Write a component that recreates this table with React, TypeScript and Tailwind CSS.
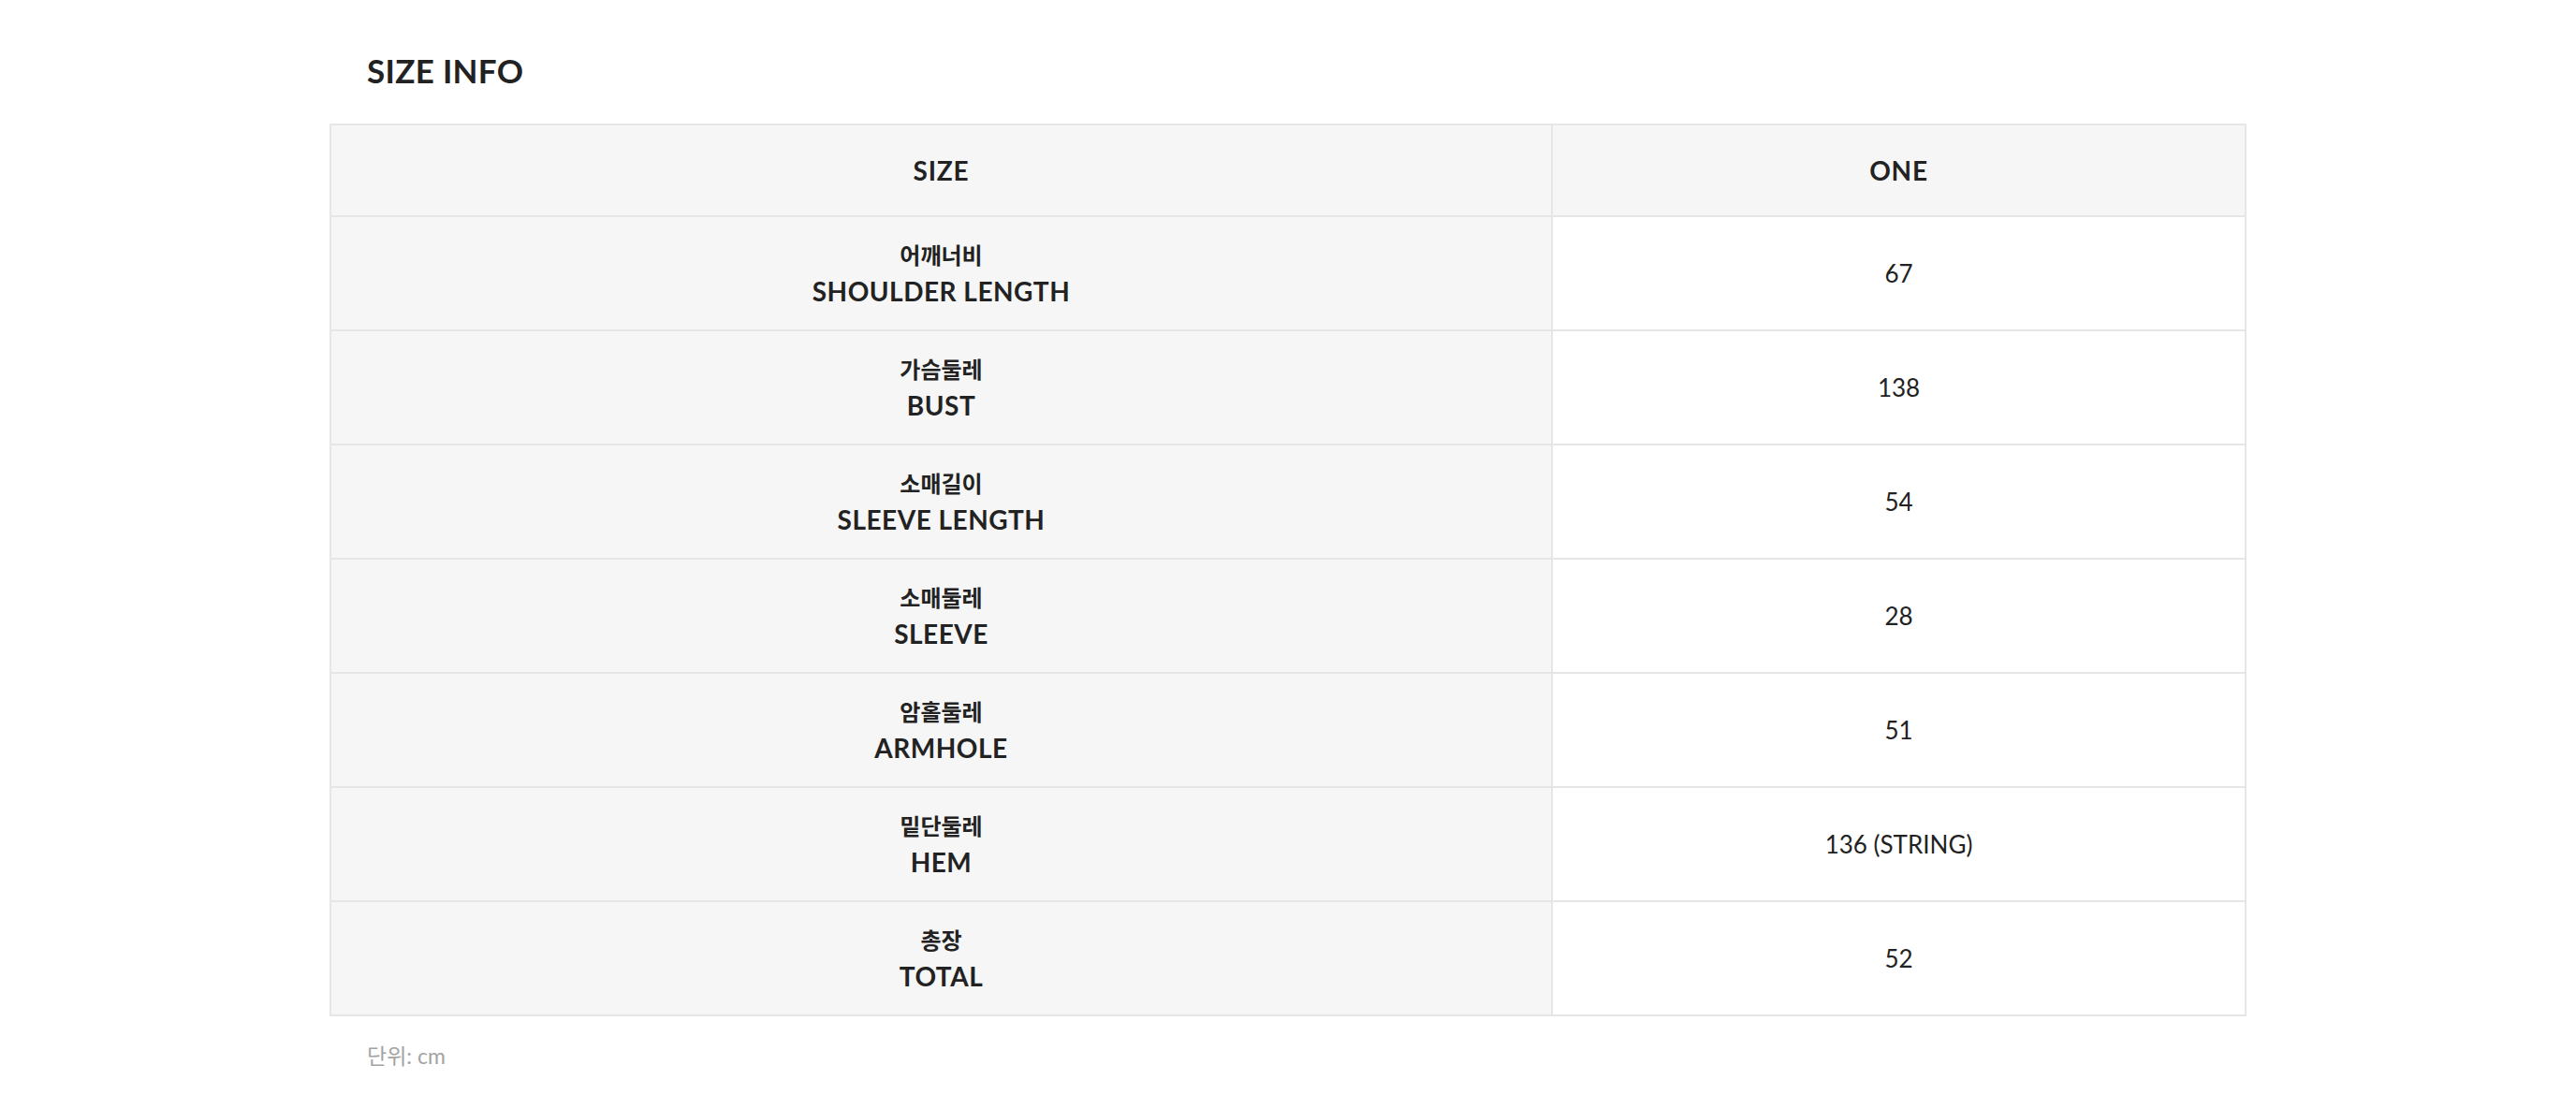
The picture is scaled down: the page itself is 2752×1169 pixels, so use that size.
import React from 'react';

const rows = [
  { ko: '어깨너비', en: 'SHOULDER LENGTH', value: '67' },
  { ko: '가슴둘레', en: 'BUST', value: '138' },
  { ko: '소매길이', en: 'SLEEVE LENGTH', value: '54' },
  { ko: '소매둘레', en: 'SLEEVE', value: '28' },
  { ko: '암홀둘레', en: 'ARMHOLE', value: '51' },
  { ko: '밑단둘레', en: 'HEM', value: '136 (STRING)' },
  { ko: '총장', en: 'TOTAL', value: '52' },
];

const font = "font-['Lato','Noto_Sans_CJK_KR',sans-serif]";

export default function App() {
  return (
    <div className={`min-h-screen bg-white ${font} text-[#222]`}>
      <div className="ml-[352px] w-[2048px] pt-[54px]">
        {/* Title */}
        <h2 className="pl-[40px] text-[35px] leading-[42px] font-bold tracking-[0.3px]">SIZE INFO</h2>

        {/* Size table */}
        <div className="mt-[36px] border-2 border-[#e6e6e6]">
          <div className="grid grid-cols-[1305px_1fr] border-b-2 border-[#e6e6e6] bg-[#f6f6f6]">
            <div className="h-[96px] flex items-center justify-center border-r-2 border-[#e6e6e6] text-[28px] font-bold tracking-[0.8px]">
              SIZE
            </div>
            <div className="h-[96px] flex items-center justify-center text-[28px] font-bold tracking-[0.8px]">ONE</div>
          </div>

          {rows.map((row, i) => (
            <div
              key={row.en}
              className={`grid grid-cols-[1305px_1fr] ${i < rows.length - 1 ? 'border-b-2 border-[#e6e6e6]' : ''}`}
            >
              <div className="h-[120px] flex flex-col items-center justify-center border-r-2 border-[#e6e6e6] bg-[#f6f6f6] leading-[39px] font-bold">
                <span className="text-[24px]">{row.ko}</span>
                <span className="text-[28px] tracking-[0.5px]">{row.en}</span>
              </div>
              <div className="h-[120px] flex items-center justify-center bg-white text-[26px]">{row.value}</div>
            </div>
          ))}
        </div>

        {/* Unit note */}
        <p className="pl-[40px] mt-[26px] text-[23px] leading-[32px] font-normal text-[#a3a3a3]">단위: cm</p>
      </div>
    </div>
  );
}
